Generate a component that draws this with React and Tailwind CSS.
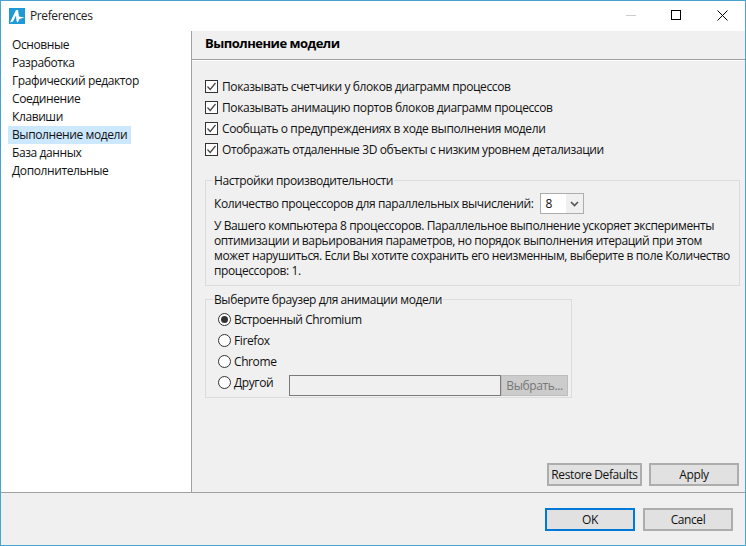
const font = { fontFamily: '"Open Sans", "Noto Sans", sans-serif' };

function Check({ children }) {
  return (
    <div className="flex h-[21px] items-center gap-[4px]">
      <span className="flex h-[13px] w-[13px] items-center justify-center border border-[#333] bg-white">
        <svg width="11" height="11" viewBox="0 0 11 11" fill="none">
          <path d="M1.5 5.5 L4.2 8.5 L9.5 2" stroke="#444" strokeWidth="1.2" />
        </svg>
      </span>
      <span>{children}</span>
    </div>
  );
}

function Radio({ children, on }) {
  return (
    <div className="flex h-[21px] items-center gap-[3px]">
      <span className="flex h-[13px] w-[13px] items-center justify-center rounded-full border border-[#333] bg-white">
        {on && <span className="h-[7px] w-[7px] rounded-full bg-[#333]" />}
      </span>
      <span>{children}</span>
    </div>
  );
}

function Btn({ children, className = "" }) {
  return (
    <div className={"flex h-[23px] items-center justify-center bg-[#e1e1e1] " + className}>
      {children}
    </div>
  );
}

export default function App() {
  const items = ["Основные", "Разработка", "Графический редактор", "Соединение", "Клавиши", "Выполнение модели", "База данных", "Дополнительные"];
  return (
    <div style={font} className="flex h-[546px] w-[746px] flex-col overflow-hidden border border-[#4aa3cf] bg-[#f0f0f0] text-[12px] tracking-[-0.4px] text-[#111]">
      <div className="flex h-[30px] items-center bg-white">
        <svg className="ml-[8px]" width="16" height="16" viewBox="0 0 16 16">
          <rect width="16" height="16" fill="#1f9ad6" />
          <path d="M1 14.5 L7 2 L9 2 L10 8.5 L15.5 9.5 L10.5 11 L8.8 14.5 L7.5 13 L7 7.5 L4 13.5 Z" fill="#fff" />
        </svg>
        <span className="ml-[5px] text-[#222]">Preferences</span>
        <div className="ml-auto flex h-full items-center pb-[2px]">
          <span className="mr-[35px] h-px w-[10px] bg-[#ccc]" />
          <span className="mr-[36px] h-[10px] w-[10px] border border-black" />
          <svg className="mr-[17px]" width="11" height="11" viewBox="0 0 11 11" fill="none">
            <path d="M0.5 0.5 L10.5 10.5 M10.5 0.5 L0.5 10.5" stroke="#000" strokeWidth="1" />
          </svg>
        </div>
      </div>
      <div className="flex min-h-0 flex-1">
        <div className="w-[191px] border-r border-[#a0a0a0] bg-white pl-[7px] pt-[5px]">
          {items.map((t, i) => (
            <div key={t} className={"flex h-[18px] w-[123px] items-center whitespace-nowrap pl-[4px] " + (i === 5 ? "bg-[#cce8ff]" : "")}>
              {t}
            </div>
          ))}
        </div>
        <div className="flex flex-1 flex-col">
          <div className="flex h-[29px] items-center border-b border-[#a0a0a0] pb-[2px] pl-[13px] text-[13px] font-bold tracking-[-0.5px] text-black">
            Выполнение модели
          </div>
          <div className="h-px bg-white" />
          <div className="flex flex-1 flex-col pl-[13px] pr-[5px] pt-[15px]">
            <Check>Показывать счетчики у блоков диаграмм процессов</Check>
            <Check>Показывать анимацию портов блоков диаграмм процессов</Check>
            <Check>Сообщать о предупреждениях в ходе выполнения модели</Check>
            <Check>Отображать отдаленные 3D объекты с низким уровнем детализации</Check>
            <fieldset className="mt-[13px] h-[113px] border border-[#dcdcdc] px-[8px]">
              <legend className="-ml-[1px] px-[1px] leading-[15px]">Настройки производительности</legend>
              <div className="mt-[5px] flex h-[21px] items-center gap-[6px]">
                <span>Количество процессоров для параллельных вычислений:</span>
                <div className="ml-px flex h-[21px] w-[44px] items-center border border-[#adadad] bg-white pl-[4px]">
                  8
                  <span className="ml-auto flex h-[19px] w-[17px] items-center justify-center bg-[#f0f0f0]">
                    <svg width="9" height="6" viewBox="0 0 9 6" fill="none"><path d="M1 1 L4.5 4.5 L8 1" stroke="#555" strokeWidth="1.7" /></svg>
                  </span>
                </div>
              </div>
              <p className="mt-[4px] leading-[15px]">
                У Вашего компьютера 8 процессоров. Параллельное выполнение ускоряет эксперименты оптимизации и варьирования параметров, но порядок выполнения итераций при этом может нарушиться. Если Вы хотите сохранить его неизменным, выберите в поле Количество процессоров: 1.
              </p>
            </fieldset>
            <fieldset className="mt-[6px] h-[106px] w-[367px] border border-[#dcdcdc] pl-[12px]">
              <legend className="-ml-[5px] px-[1px] leading-[15px]">Выберите браузер для анимации модели</legend>
              <div className="pt-[2px]">
                <Radio on>Встроенный Chromium</Radio>
                <Radio>Firefox</Radio>
                <Radio>Chrome</Radio>
                <div className="flex items-start">
                  <div className="w-[71px]"><Radio>Другой</Radio></div>
                  <div className="mt-[3px] h-[21px] w-[212px] border border-[#7a7a7a] bg-[#f0f0f0]" />
                  <div className="mt-[3px] flex h-[21px] w-[67px] items-center justify-center border border-[#bdbdbd] bg-[#cccccc] text-[#777]">Выбрать...</div>
                </div>
              </div>
            </fieldset>
            <div className="mt-auto flex justify-end gap-[7px] pb-[6px] pr-[1px]">
              <Btn className="w-[95px] border-2 border-[#adadad]">Restore Defaults</Btn>
              <Btn className="w-[90px] border-2 border-[#adadad]">Apply</Btn>
            </div>
          </div>
        </div>
      </div>
      <div className="flex h-[53px] justify-end gap-[8px] border-t border-[#a0a0a0] pr-[12px] pt-[15px]">
        <Btn className="w-[90px] border-2 border-[#0078d7]">OK</Btn>
        <Btn className="w-[90px] border-2 border-[#adadad]">Cancel</Btn>
      </div>
    </div>
  );
}
